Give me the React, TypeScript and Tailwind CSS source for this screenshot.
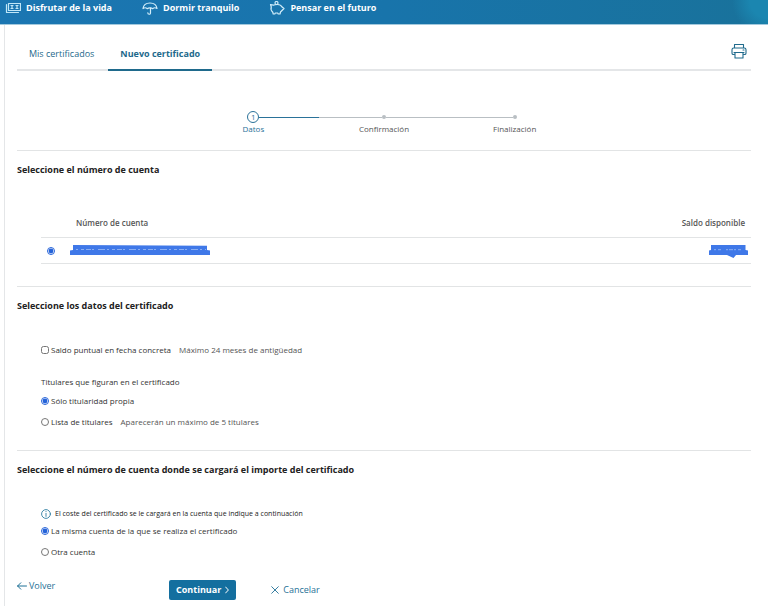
import { useState, type ReactNode } from "react";

const ICON = { fill: "none", stroke: "currentColor", strokeLinecap: "round", strokeLinejoin: "round", "aria-hidden": true } as const;

function MoneyIcon() {
  return (
    <svg {...ICON} viewBox="0 0 16 12" className="h-3 w-4 text-[#bfe6f7]" strokeWidth="1.2">
      <path d="M3.500 1.500h12v7h-12z" />
      <path d="M1.500 2.500V10.500h12" />
      <path d="M7 3.500v3M12 3.500v3M6 3.500h2M6 6.500h2M11 3.500h2M11 6.500h2" />
    </svg>
  );
}

function UmbrellaIcon() {
  return (
    <svg {...ICON} viewBox="0 0 16 14" className="h-3.5 w-4 text-[#d3eefa]" strokeWidth="1.2">
      <path d="M1 7.500C1.500 4 4.500 2 8 2s6.500 2 7 5.500c-1.500-1-3-1-4.200.2C9.500 6.500 6.500 6.500 5.200 7.700 4 6.500 2.500 6.500 1 7.500z" />
      <path d="M8.500 7v5c0 1.700-2.700 1.700-2.700-.2" />
    </svg>
  );
}

function PiggyIcon() {
  return (
    <svg {...ICON} viewBox="0 0 16 14" className="h-3.5 w-4 text-[#d3eefa]" strokeWidth="1.2">
      <path d="M1.500 3.500l2.800.7C5.300 3.600 6.500 3.500 8.500 3.500c2.200 0 3.700.8 4.300 2.200l2.200 1.800-2 2-1.500 1.500-.5 2H9.200L8.700 12H6.300l-.5 1H4.200l-.4-1.800C2.500 10 1.500 8 2.300 6z" />
      <circle cx="7.500" cy="2" r="1.500" />
    </svg>
  );
}

function PrinterIcon() {
  return (
    <svg {...ICON} viewBox="0 0 16 16" className="size-4" strokeWidth="1.1">
      <path d="M3.500 5V1.500h9V5M3.500 11.500h-1c-1 0-1.500-.5-1.500-1.300V6.700C1 5.600 1.600 5 2.700 5h10.600c1.100 0 1.700.6 1.700 1.700v3.500c0 .8-.5 1.300-1.500 1.300h-1" />
      <path d="M4 9.500h8V15H4zM3 9.500h10M12 7h1" />
    </svg>
  );
}

function InfoIcon() {
  return (
    <svg {...ICON} viewBox="0 0 10 10" className="size-2.5 text-[#2f7fa3]" strokeWidth="0.9">
      <circle cx="5" cy="5" r="4.400" />
      <path d="M5 4.400v3M5 2.500v.2" />
    </svg>
  );
}

function ArrowLeftIcon() {
  return (
    <svg {...ICON} viewBox="0 0 10 8" className="h-2 w-2.5" strokeWidth="1">
      <path d="M9.500 4h-9M3.800.8L.6 4l3.200 3.200" />
    </svg>
  );
}

function CrossIcon() {
  return (
    <svg {...ICON} viewBox="0 0 8 8" className="size-2" strokeWidth="0.9">
      <path d="M.7.7l6.600 6.600M7.300.7L.7 7.300" />
    </svg>
  );
}

function ChevronIcon() {
  return (
    <svg {...ICON} viewBox="0 0 4 8" className="h-2 w-1" strokeWidth="1">
      <path d="M.6 1L3.400 4 .6 7" />
    </svg>
  );
}

function AccountScribble() {
  return (
    <svg role="img" aria-label="Cuenta oculta" viewBox="0 0 140 12" className="h-3 w-[140px]">
      <path d="M3 0L137 .8V5L140 5.500V10H0V5.500L3 5z" fill="#3f78e8" />
      <path d="M6 4.500H136" stroke="#9dbcf5" strokeWidth="0.8" strokeDasharray="2 3 3 2 5 1 2 4 7 2" />
    </svg>
  );
}

function BalanceScribble() {
  return (
    <svg role="img" aria-label="Saldo oculto" viewBox="0 0 39 14" className="h-3.5 w-[39px]">
      <path d="M2 1H36.500V6L39 6.500V11H27L24.500 14 18 11H0V6.500L2 6z" fill="#3f78e8" />
      <path d="M5 5.700H35" stroke="#9dbcf5" strokeWidth="0.8" strokeDasharray="2 2 3 5 2 1 4 1" />
    </svg>
  );
}

function Step({ label, state, left, right }: { label: string; state: "current" | "pending"; left: string; right: string }) {
  return (
    <li className={state === "current" ? "flex-1 text-[#2a7299]" : "flex-1 text-[#555]"}>
      <div className="flex h-3 items-center">
        <span className={`h-px flex-1 ${left}`} />
        {state === "current" ? (
          <span className="flex size-3 items-center justify-center rounded-full border border-[#2a7299] text-[8px] leading-none">1</span>
        ) : (
          <span className="size-1 rounded-full bg-[#b9bfc3]" />
        )}
        <span className={`h-px flex-1 ${right}`} />
      </div>
      {label}
    </li>
  );
}

function Choice({ type, name, label, hint, checked, onChange }: {
  type: "radio" | "checkbox"; name: string; label: string; hint?: string; checked: boolean; onChange: () => void;
}) {
  return (
    <div className="flex items-center">
      <label className="flex items-center gap-0.5">
        <input type={type} name={name} checked={checked} onChange={onChange} className="size-2 accent-[#2563d9]" />
        {label}
      </label>
      {hint && <span className="ml-2 text-[#555]">{hint}</span>}
    </div>
  );
}

function Section({ title, children }: { title: string; children: ReactNode }) {
  return (
    <section className="border-t border-[#e2e4e5] pt-[13px] pb-[22px]">
      <h2 className="text-[9px] leading-3 font-bold text-[#222]">{title}</h2>
      {children}
    </section>
  );
}

export default function App() {
  const [single, setSingle] = useState(false);
  const [owners, setOwners] = useState("own");
  const [charge, setCharge] = useState("same");

  return (
    <div className="flex min-h-screen flex-col bg-white font-['Open_Sans','Noto_Sans',sans-serif] text-[#333]">
      <header className="h-[25px] border-b border-[#a3c9dd] bg-[radial-gradient(circle_at_100%_0,#1b86b0_0,#1b86b0_18px,transparent_36px),linear-gradient(to_right,#1b76b2,#1874ab_50%,#19729b)] pl-[5px]">
        <nav className="flex h-4 items-center gap-[30px] text-[9px] font-bold text-white">
          <a href="#vida" className="flex items-center gap-[5px]"><MoneyIcon />Disfrutar de la vida</a>
          <a href="#tranquilo" className="flex items-center gap-[5px]"><UmbrellaIcon />Dormir tranquilo</a>
          <a href="#futuro" className="flex items-center gap-[5px]"><PiggyIcon />Pensar en el futuro</a>
        </nav>
      </header>

      <main className="ml-1 flex-1 border-l border-[#e4e6e8] pt-[15px] pr-[17px] pl-3">
        <div className="flex justify-between border-b-2 border-[#e4e6e8] text-[#1f6a8c]">
          <nav className="-mb-0.5 flex gap-0.5 text-[9px] leading-3">
            <a href="#mis" className="px-3 pt-2 pb-2">Mis certificados</a>
            <a href="#nuevo" className="border-b-2 border-[#1f6a8c] px-3 pt-2 pb-[9px] font-bold">Nuevo certificado</a>
          </nav>
          <button type="button" aria-label="Imprimir" className="mr-1 flex pt-[3px]"><PrinterIcon /></button>
        </div>

        <ol className="mx-auto mt-10 mb-[15px] flex w-[392px] text-center text-[8px] leading-3">
          <Step label="Datos" state="current" left="" right="bg-[#2a7299]" />
          <Step label="Confirmación" state="pending" left="bg-[#b9bfc3]" right="bg-[#b9bfc3]" />
          <Step label="Finalización" state="pending" left="bg-[#b9bfc3]" right="" />
        </ol>

        <Section title="Seleccione el número de cuenta">
          <div className="mt-10 pl-6">
            <table className="w-full text-[8px] leading-3">
              <thead>
                <tr className="text-[#555]">
                  <td className="w-[29px]" />
                  <th scope="col" className="pt-px pb-2 pl-1.5 text-left font-semibold">Número de cuenta</th>
                  <th scope="col" className="pt-px pr-1.5 pb-2 text-right font-semibold">Saldo disponible</th>
                </tr>
              </thead>
              <tbody>
                <tr className="h-[26px] border-y border-[#e2e4e5]">
                  <td className="pl-1.5">
                    <input type="radio" name="account" aria-label="Cuenta" defaultChecked className="block size-2 accent-[#2563d9]" />
                  </td>
                  <td><div className="flex"><AccountScribble /></div></td>
                  <td className="pr-[3px]"><div className="flex justify-end"><BalanceScribble /></div></td>
                </tr>
              </tbody>
            </table>
          </div>
        </Section>

        <Section title="Seleccione los datos del certificado">
          <div className="mt-8 pl-6 text-[8px] leading-3">
            <Choice type="checkbox" name="single" label="Saldo puntual en fecha concreta" hint="Máximo 24 meses de antigüedad" checked={single} onChange={() => setSingle(!single)} />
            <fieldset className="mt-5">
              <legend className="mb-[7px]">Titulares que figuran en el certificado</legend>
              <div className="flex flex-col gap-[9px]">
                <Choice type="radio" name="owners" label="Sólo titularidad propia" checked={owners === "own"} onChange={() => setOwners("own")} />
                <Choice type="radio" name="owners" label="Lista de titulares" hint="Aparecerán un máximo de 5 titulares" checked={owners === "list"} onChange={() => setOwners("list")} />
              </div>
            </fieldset>
          </div>
        </Section>

        <Section title="Seleccione el número de cuenta donde se cargará el importe del certificado">
          <div className="mt-8 pl-6 text-[8px] leading-3">
            <p className="mb-[5px] flex items-center gap-1 text-[7px] leading-3 font-medium text-[#222]">
              <InfoIcon />
              El coste del certificado se le cargará en la cuenta que indique a continuación
            </p>
            <div className="flex flex-col gap-[9px]">
              <Choice type="radio" name="charge" label="La misma cuenta de la que se realiza el certificado" checked={charge === "same"} onChange={() => setCharge("same")} />
              <Choice type="radio" name="charge" label="Otra cuenta" checked={charge === "other"} onChange={() => setCharge("other")} />
            </div>
          </div>
        </Section>

        <div className="flex items-start text-[9px] leading-3 text-[#1f7196]">
          <a href="#volver" className="flex w-[152px] items-center gap-0.5"><ArrowLeftIcon />Volver</a>
          <button type="button" className="flex h-5 items-center gap-1 rounded-xs bg-[#146f9f] px-[7px] font-bold text-white">Continuar<ChevronIcon /></button>
          <button type="button" className="ml-[35px] flex h-5 items-center gap-1"><CrossIcon />Cancelar</button>
        </div>
      </main>
    </div>
  );
}
